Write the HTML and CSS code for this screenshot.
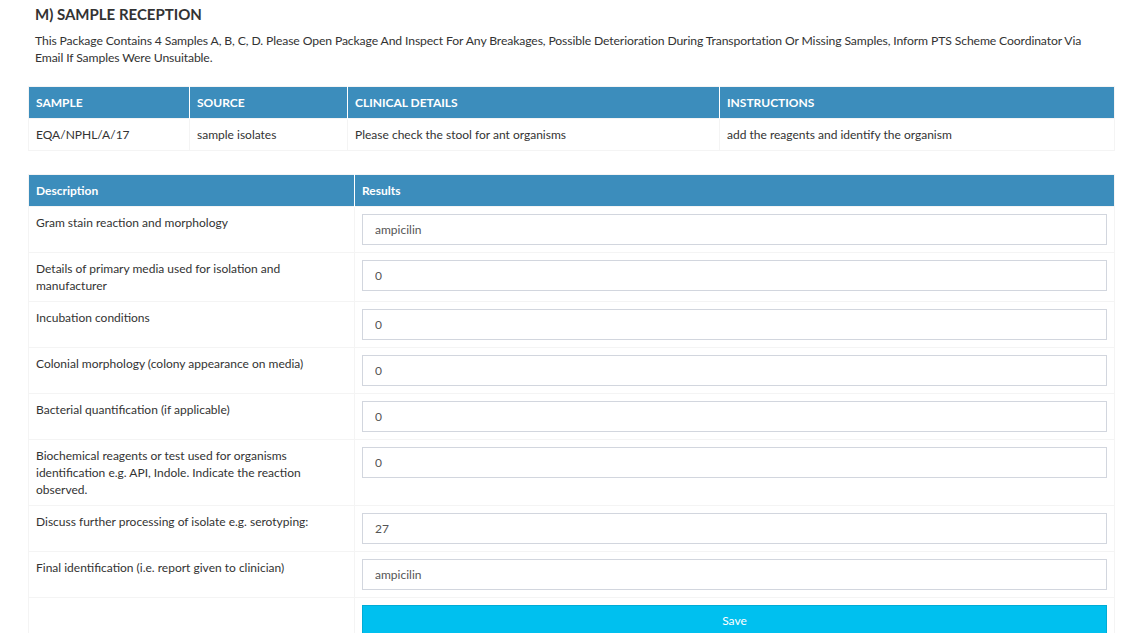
FILE: index.html
```html
<!DOCTYPE html>
<html>
<head>
<meta charset="utf-8">
<link rel="stylesheet" href="styles.css">
</head>
<body>
<div class="box">
  <h3 class="title">M) SAMPLE RECEPTION</h3>
  <p class="intro">This Package Contains 4 Samples A, B, C, D. Please Open Package And Inspect For Any Breakages, Possible Deterioration During Transportation Or Missing Samples, Inform PTS Scheme Coordinator Via Email If Samples Were Unsuitable.</p>

  <table class="tbl info">
    <colgroup>
      <col class="c1"><col class="c2"><col class="c3"><col class="c4">
    </colgroup>
    <thead>
      <tr><th>SAMPLE</th><th>SOURCE</th><th>CLINICAL DETAILS</th><th>INSTRUCTIONS</th></tr>
    </thead>
    <tbody>
      <tr><td>EQA/NPHL/A/17</td><td>sample isolates</td><td>Please check the stool for ant organisms</td><td>add the reagents and identify the organism</td></tr>
    </tbody>
  </table>

  <table class="tbl results">
    <colgroup>
      <col class="d1"><col class="d2">
    </colgroup>
    <thead>
      <tr><th>Description</th><th>Results</th></tr>
    </thead>
    <tbody>
      <tr><td>Gram stain reaction and morphology</td><td><input class="field" type="text" value="ampicilin"></td></tr>
      <tr><td>Details of primary media used for isolation and<br>manufacturer</td><td><input class="field" type="text" value="0"></td></tr>
      <tr><td>Incubation conditions</td><td><input class="field" type="text" value="0"></td></tr>
      <tr><td>Colonial morphology (colony appearance on media)</td><td><input class="field" type="text" value="0"></td></tr>
      <tr><td>Bacterial quantification (if applicable)</td><td><input class="field" type="text" value="0"></td></tr>
      <tr><td>Biochemical reagents or test used for organisms<br>identification e.g. API, Indole. Indicate the reaction<br>observed.</td><td><input class="field" type="text" value="0"></td></tr>
      <tr><td>Discuss further processing of isolate e.g. serotyping:</td><td><input class="field" type="text" value="27"></td></tr>
      <tr><td>Final identification (i.e. report given to clinician)</td><td><input class="field" type="text" value="ampicilin"></td></tr>
      <tr><td></td><td><button class="save" type="button">Save</button></td></tr>
    </tbody>
  </table>
</div>
</body>
</html>
```

FILE: styles.css
```css
* { box-sizing: border-box; }
html, body { margin: 0; padding: 0; background: #fff; }
body {
  font-family: Lato, "Open Sans", sans-serif;
  color: #333;
  font-size: 12px;
  overflow: hidden;
}
.box {
  width: 1114px;
  padding: 7px 0 0 28px;
}
.title {
  margin: 0 0 10px 7px;
  font-size: 15px;
  font-weight: 700;
  line-height: 15px;
  color: #333;
}
.intro {
  width: 1060px;
  margin: 0 0 20px 7px;
  font-size: 12.2px;
  letter-spacing: -0.12px;
  line-height: 17px;
  color: #333;
}
.tbl {
  width: 1086px;
  border-collapse: collapse;
  table-layout: fixed;
  margin-bottom: 23px;
}
.tbl th {
  background: #3c8dbc;
  color: #fff;
  text-align: left;
  font-weight: 700;
  font-size: 12px;
  line-height: 15px;
  padding: 8px 7px 8px 7px;
  border: 1px solid #fff;
  border-top: 1px solid #f4f4f4;
  border-bottom: none;
}
.tbl th:first-child { border-left: 1px solid #f4f4f4; }
.tbl th:last-child { border-right: 1px solid #f4f4f4; }
.tbl td {
  border: 1px solid #f4f4f4;
  padding: 7px 7px 7px 7px;
  line-height: 17px;
  vertical-align: top;
  font-size: 12px;
}
.c1 { width: 161px; }
.c2 { width: 158px; }
.c3 { width: 372px; }
.c4 { width: 395px; }
.d1 { width: 326px; }
.d2 { width: 760px; }
.field {
  display: block;
  width: 100%;
  height: 31px;
  border: 1px solid #d2d6de;
  padding: 0 12px;
  font-family: inherit;
  font-size: 12px;
  color: #555;
  background: #fff;
  outline: none;
}
.save {
  display: block;
  width: 100%;
  height: 30px;
  background: #00c0ef;
  border: 1px solid #00acd6;
  color: #fff;
  font-family: inherit;
  font-size: 12px;
  font-weight: 400;
  cursor: pointer;
}
```
